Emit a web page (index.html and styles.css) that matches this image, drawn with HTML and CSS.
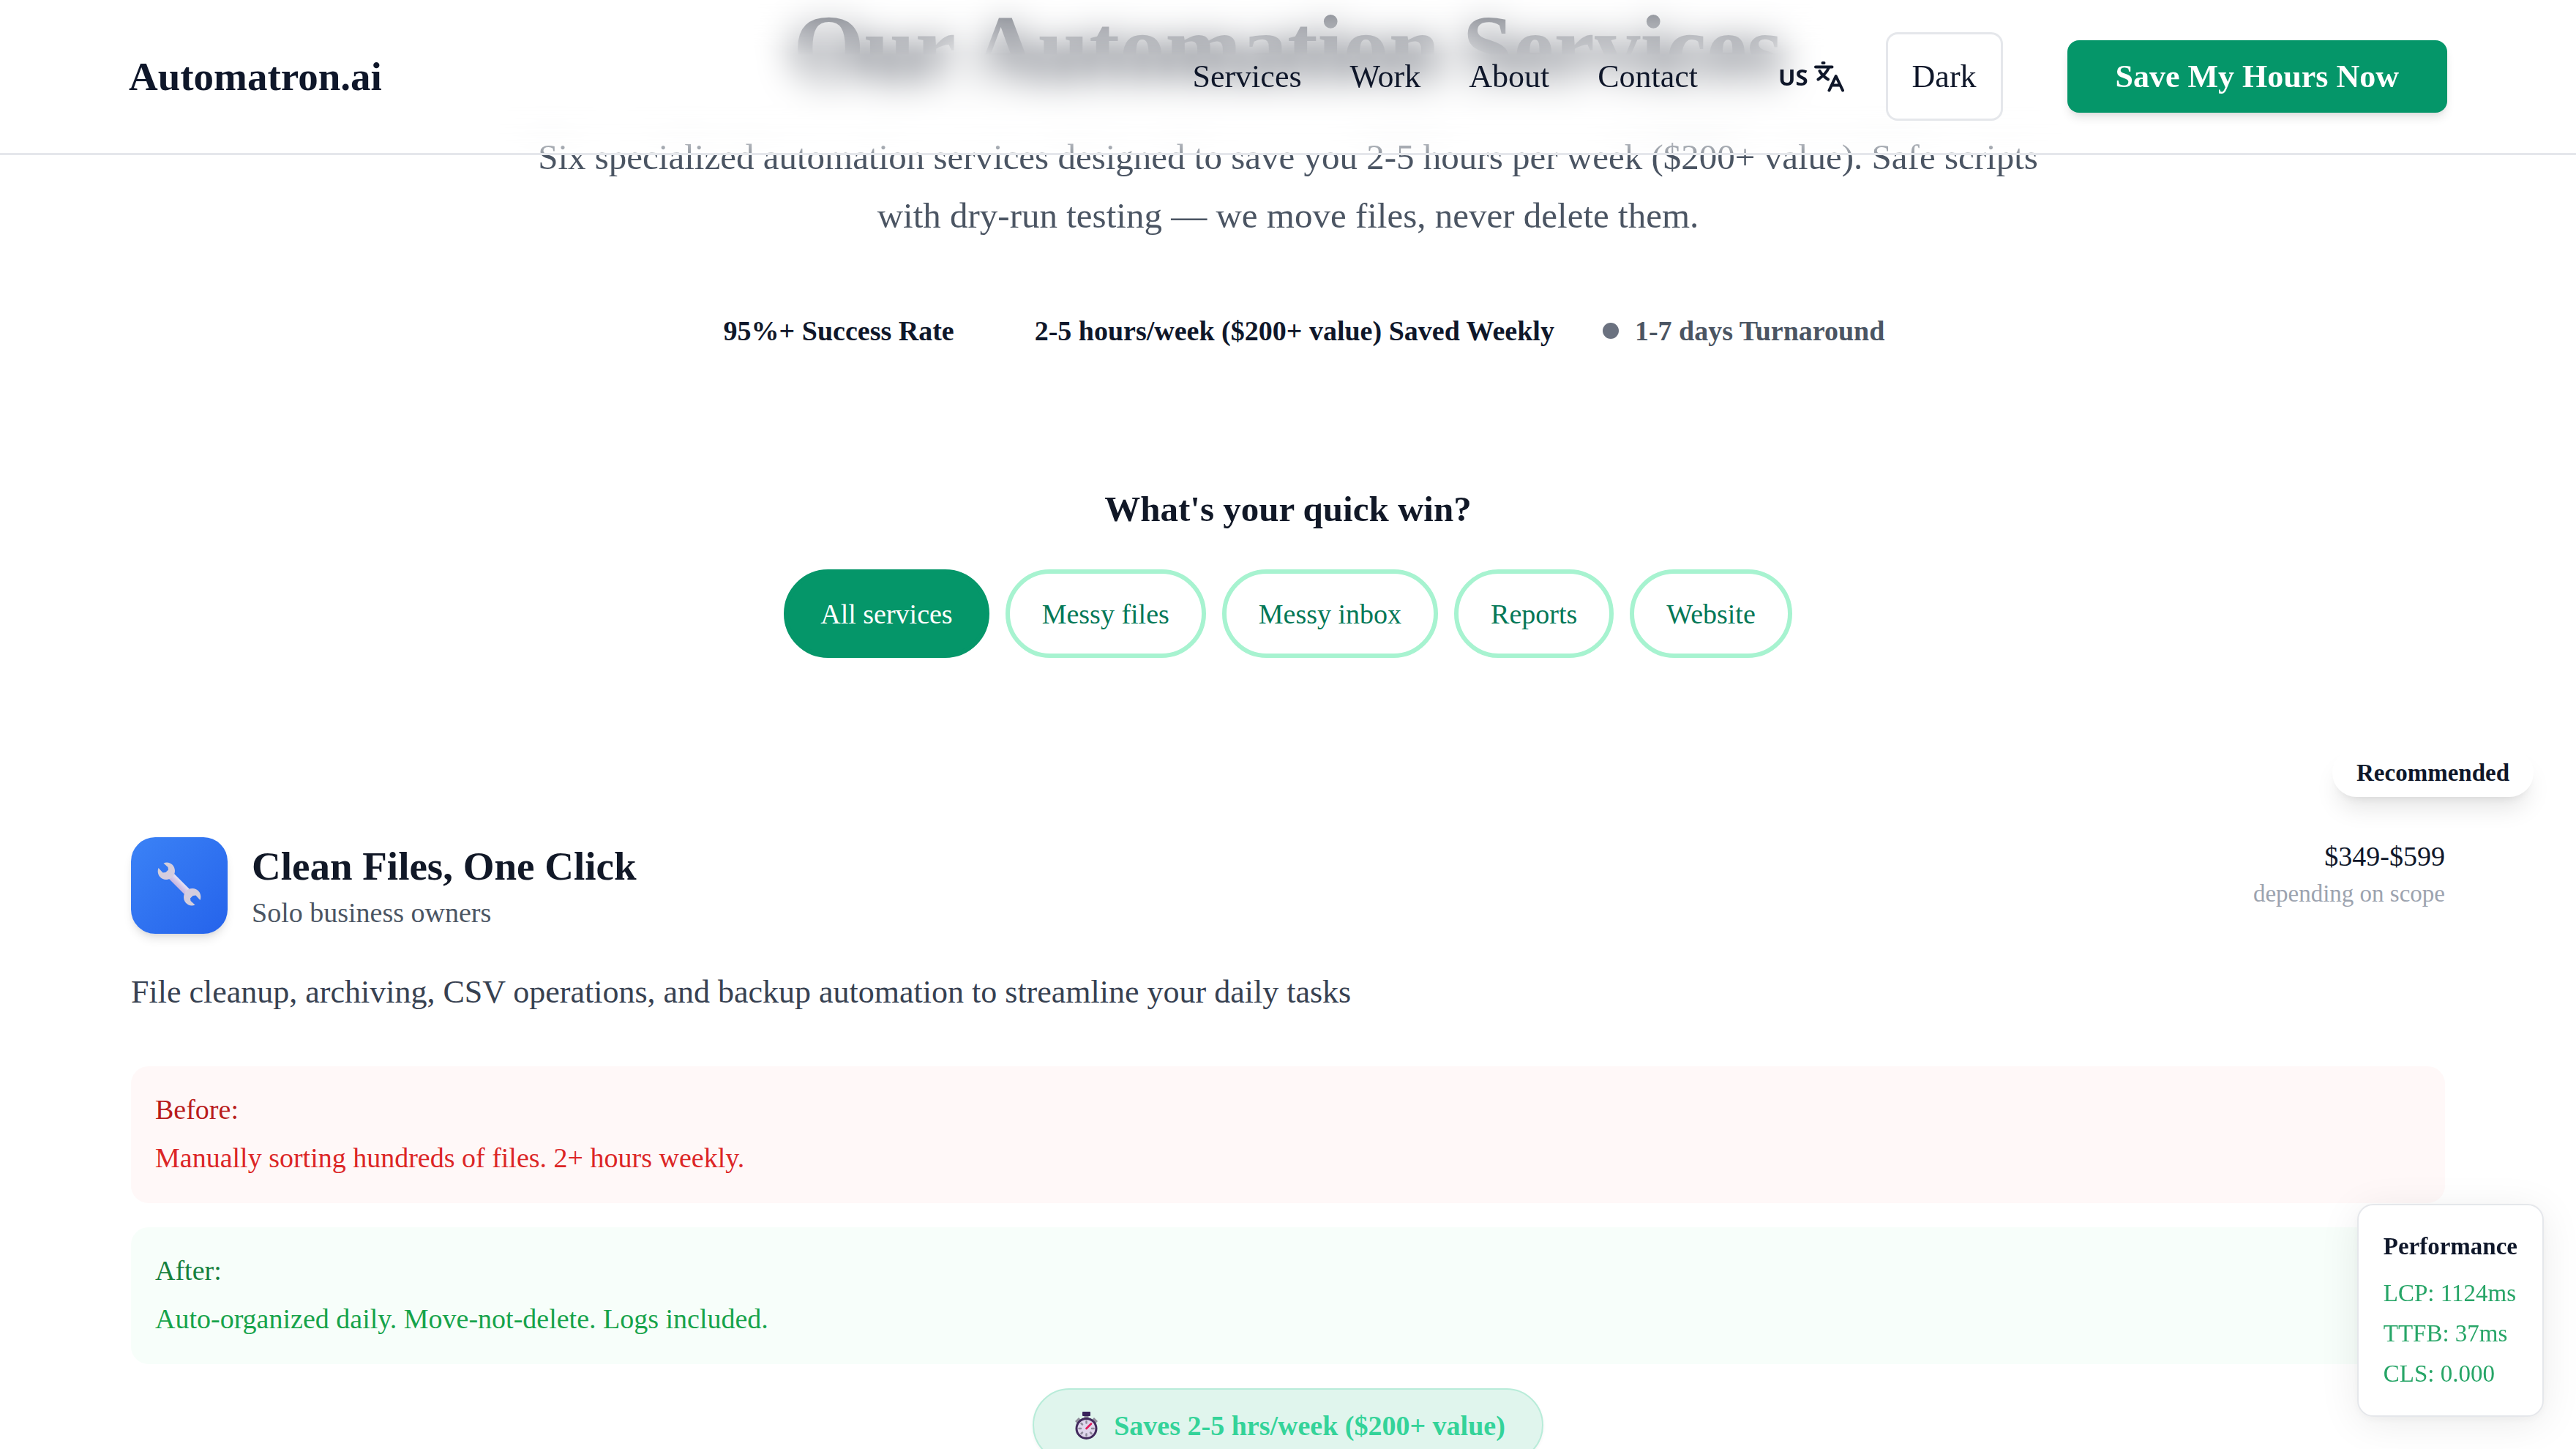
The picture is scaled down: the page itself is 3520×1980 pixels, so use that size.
FILE: index.html
```html
<!DOCTYPE html>
<html lang="en">
<head>
<meta charset="utf-8">
<meta name="viewport" content="width=device-width, initial-scale=1">
<title>Our Automation Services | Automatron.ai</title>
<link rel="stylesheet" href="styles.css">
</head>
<body>
<header class="site-header">
  <a class="logo" href="#">Automatron.ai</a>
  <div class="header-right">
    <nav class="nav" aria-label="Main">
      <a href="#services">Services</a>
      <a href="#work">Work</a>
      <a href="#about">About</a>
      <a href="#contact">Contact</a>
    </nav>
    <div class="tools">
      <button class="lang" type="button" aria-label="Change language, US">
        <span>US</span>
        <svg class="lang-icon" viewBox="0 0 42 42" aria-hidden="true">
          <path d="M11.5 2h2M2 7.500h22.500M20 8.500C17 15 12 20 5.500 24.500M7.500 13C10 17.500 14 21.500 19 24.500M20.500 39.500L29.700 20L39 39.500M24 32.500h11.500"/>
        </svg>
      </button>
      <button class="theme" type="button">Dark</button>
    </div>
    <button class="cta" type="button">Save My Hours Now</button>
  </div>
</header>

<main>
  <section class="hero">
    <h1>Our Automation Services</h1>
    <p class="lead">Six specialized automation services designed to save you 2-5 hours per week ($200+ value). Safe scripts with dry-run testing — we move files, never delete them.</p>
    <ul class="stats">
      <li><span class="dot"></span>95%+ Success Rate</li>
      <li><span class="dot"></span>2-5 hours/week ($200+ value) Saved Weekly</li>
      <li class="muted"><span class="dot"></span>1-7 days Turnaround</li>
    </ul>
  </section>

  <section class="filter">
    <h2>What's your quick win?</h2>
    <div class="chips">
      <button class="chip active" type="button">All services</button>
      <button class="chip" type="button">Messy files</button>
      <button class="chip" type="button">Messy inbox</button>
      <button class="chip" type="button">Reports</button>
      <button class="chip" type="button">Website</button>
    </div>
  </section>

  <section class="services" id="services">
    <article class="card">
      <span class="badge">Recommended</span>
      <div class="card-head">
        <div class="card-icon">
          <svg viewBox="0 0 60 60" aria-hidden="true">
            <defs>
              <linearGradient id="shaft" gradientUnits="userSpaceOnUse" x1="26" y1="34" x2="34" y2="26">
                <stop offset="0" stop-color="#c4b2dc"/><stop offset=".5" stop-color="#d5c8ea"/><stop offset="1" stop-color="#ece8f4"/>
              </linearGradient>
              <linearGradient id="head" x1="0" y1="0" x2="1" y2="1">
                <stop offset="0" stop-color="#d2cfd6"/><stop offset="1" stop-color="#d6cbe2"/>
              </linearGradient>
            </defs>
            <path fill="url(#shaft)" d="M15 22L22 15L45 38L38 45Z"/>
            <path fill="url(#head)" d="M8.500 1.500C16 -2 24 4 24 12C24 19 18.500 24 12 24C4 24 -1.500 16 1.500 8L7.500 14.500L11.500 14L15 10.500L14.500 7Z"/>
            <path fill="url(#head)" transform="rotate(180 30 30)" d="M8.500 1.500C16 -2 24 4 24 12C24 19 18.500 24 12 24C4 24 -1.500 16 1.500 8L7.500 14.500L11.500 14L15 10.500L14.500 7Z"/>
          </svg>
        </div>
        <div class="card-title">
          <h3>Clean Files, One Click</h3>
          <p>Solo business owners</p>
        </div>
        <div class="price">
          <p class="amount">$349-$599</p>
          <p class="scope">depending on scope</p>
        </div>
      </div>
      <p class="desc">File cleanup, archiving, CSV operations, and backup automation to streamline your daily tasks</p>
      <div class="compare">
        <div class="note before">
          <p class="note-label">Before:</p>
          <p class="note-text">Manually sorting hundreds of files. 2+ hours weekly.</p>
        </div>
        <div class="note after">
          <p class="note-label">After:</p>
          <p class="note-text">Auto-organized daily. Move-not-delete. Logs included.</p>
        </div>
      </div>
      <p class="saves">
        <svg viewBox="0 0 31 38" aria-hidden="true">
          <path fill="#8f8c9b" d="M0 13L5 8L9 12L4 17ZM31 13L26 8L22 12L27 17ZM12.500 4h6v6h-6z"/>
          <rect x="10" y="0" width="11" height="6" rx="1" fill="#38215a"/>
          <circle cx="15.500" cy="23" r="13.500" fill="#dfd6ec" stroke="#412a5c" stroke-width="3"/>
          <g stroke="#8f8c9b" stroke-width="2.500" stroke-linecap="round">
            <path d="M15.500 13v2.500M15.500 30.500v2.500M5.500 23h2.500M23 23h2.500M8.500 16l1.500 1.500M8.500 30l1.500 -1.500M22.500 30l-1.500 -1.500"/>
          </g>
          <path d="M15.500 23L22 16.500" stroke="#e11d5b" stroke-width="2.700" stroke-linecap="round"/>
        </svg>
        <span>Saves 2-5 hrs/week ($200+ value)</span>
      </p>
    </article>
  </section>
</main>

<aside class="perf">
  <h4>Performance</h4>
  <p>LCP: 1124ms</p>
  <p>TTFB: 37ms</p>
  <p>CLS: 0.000</p>
</aside>
</body>
</html>
```
FILE: styles.css
```css
* { box-sizing: border-box; margin: 0; padding: 0; }

body {
  height: 100vh;
  overflow: hidden;
  background: #fff;
  color: #0f172a;
  font-family: "Liberation Serif", "Times New Roman", serif;
  font-size: 38px;
}

button { font: inherit; color: inherit; background: none; border: 0; cursor: pointer; }
a { color: inherit; text-decoration: none; }
ul { list-style: none; }

/* Header */
.site-header {
  position: fixed;
  top: 0;
  left: 0;
  right: 0;
  z-index: 10;
  display: flex;
  align-items: center;
  justify-content: space-between;
  padding: 44px 176px;
  border-bottom: 3px solid #e5e7eb;
  background: rgba(255, 255, 255, 0.3);
  font-size: 44px;
}
.site-header::before {
  content: "";
  position: absolute;
  inset: 0;
  z-index: -1;
  -webkit-backdrop-filter: blur(26px);
  backdrop-filter: blur(26px);
  -webkit-mask-image: linear-gradient(to bottom, rgba(0, 0, 0, 0.4), #000 36%, #000 75%, rgba(0, 0, 0, 0.4));
  mask-image: linear-gradient(to bottom, rgba(0, 0, 0, 0.4), #000 36%, #000 75%, rgba(0, 0, 0, 0.4));
}
.logo { font-size: 55px; font-weight: 700; }
.header-right { display: flex; align-items: center; gap: 88px; }
.nav { display: flex; gap: 66px; }
.tools { display: flex; align-items: center; gap: 34px; }
.lang {
  display: flex;
  align-items: center;
  gap: 8px;
  padding: 0 22px;
  font-family: "Noto Sans", sans-serif;
  font-size: 31px;
  font-weight: 700;
}
.lang-icon {
  width: 42px;
  height: 42px;
  fill: none;
  stroke: currentColor;
  stroke-width: 4;
  stroke-linecap: round;
  stroke-linejoin: round;
}
.theme {
  height: 121px;
  padding: 0 33px;
  border: 3px solid #e5e7eb;
  border-radius: 16px;
  background: #fff;
}
.cta {
  height: 99px;
  padding: 0 66px;
  border-radius: 16px;
  background: #059669;
  color: #fff;
  font-weight: 700;
  box-shadow: 0 9px 13px -2px rgba(0, 0, 0, 0.1), 0 4px 9px -4px rgba(0, 0, 0, 0.1);
}

/* Hero */
.hero { text-align: center; }
.hero h1 {
  margin-bottom: 45px;
  color: #111827;
  font-size: 125px;
  line-height: 130px;
}
.lead {
  max-width: 2110px;
  margin: 0 auto;
  color: #4b5563;
  font-size: 49px;
  line-height: 80px;
}
.stats {
  display: flex;
  justify-content: center;
  gap: 66px;
  margin-top: 87px;
  font-weight: 700;
  line-height: 60px;
}
.stats li { display: flex; align-items: center; gap: 22px; }
.stats .muted { color: #4b5563; }
.dot { width: 22px; height: 22px; border-radius: 50%; }
.muted .dot { background: #6b7280; }

/* Filter */
.filter { margin-top: 178px; text-align: center; }
.filter h2 { color: #111827; font-size: 49px; line-height: 72px; }
.chips { display: flex; justify-content: center; gap: 22px; margin-top: 46px; }
.chip {
  height: 121px;
  padding: 0 44px;
  border: 6px solid #a7f3d0;
  border-radius: 61px;
  color: #047857;
}
.chip.active { border-color: #059669; background: #059669; color: #fff; }

/* Service card */
.services { margin-top: 157px; padding: 0 88px; }
.card {
  position: relative;
  display: flex;
  flex-direction: column;
  padding: 88px 91px;
}
.badge {
  position: absolute;
  top: -33px;
  right: -30px;
  padding: 0 33px;
  border-radius: 33px;
  background: #fff;
  font-size: 33px;
  font-weight: 700;
  line-height: 66px;
  box-shadow: 0 22px 33px -7px rgba(0, 0, 0, 0.1), 0 9px 13px -9px rgba(0, 0, 0, 0.1);
}
.card-head { display: flex; align-items: flex-start; gap: 33px; }
.card-icon {
  display: flex;
  align-items: center;
  justify-content: center;
  width: 132px;
  height: 132px;
  padding-bottom: 5px;
  border-radius: 33px;
  background: linear-gradient(to bottom right, #3b82f6, #2563eb);
  box-shadow: 0 9px 13px -2px rgba(0, 0, 0, 0.1), 0 4px 9px -4px rgba(0, 0, 0, 0.1);
}
.card-icon svg { width: 60px; height: 60px; }
.card-title { flex: 1; }
.card-title h3 { color: #111827; font-size: 55px; line-height: 80px; }
.card-title p { color: #4b5563; line-height: 46px; }
.price { text-align: right; }
.amount { line-height: 52px; }
.scope { color: #9ca3af; font-size: 33px; line-height: 50px; }
.desc {
  margin: 45px 0 66px;
  color: #374151;
  font-size: 44px;
  line-height: 70px;
}
.compare { display: flex; flex-direction: column; gap: 33px; }
.note { padding: 33px; border-radius: 24px; }
.note-label { margin-bottom: 11px; line-height: 52px; }
.note-text { line-height: 58px; }
.before { background: #fff8f8; color: #dc2626; }
.before .note-label { color: #b91c1c; }
.after { background: #f7fefa; color: #16a34a; }
.after .note-label { color: #15803d; }
.saves {
  display: flex;
  align-items: center;
  align-self: center;
  gap: 22px;
  height: 101px;
  margin-top: 33px;
  padding: 0 50px 0 56px;
  border: 2px solid #b8ecd9;
  border-radius: 51px;
  background: #e0f5ed;
  color: #34d399;
  font-weight: 700;
  box-shadow: 0 2px 4px rgba(0, 0, 0, 0.05);
}
.saves svg { width: 31px; height: 38px; }

/* Performance panel */
.perf {
  position: fixed;
  right: 44px;
  bottom: 44px;
  z-index: 20;
  padding: 32px 34px 29px;
  border: 2px solid #e5e7eb;
  border-radius: 22px;
  background: #fff;
  color: #27a567;
  font-size: 33px;
  line-height: 55px;
  box-shadow: 0 9px 55px rgba(0, 0, 0, 0.08), 0 4px 13px rgba(0, 0, 0, 0.04);
}
.perf h4 { margin-bottom: 13px; color: #0f172a; font-size: 33px; line-height: 48px; }
```
